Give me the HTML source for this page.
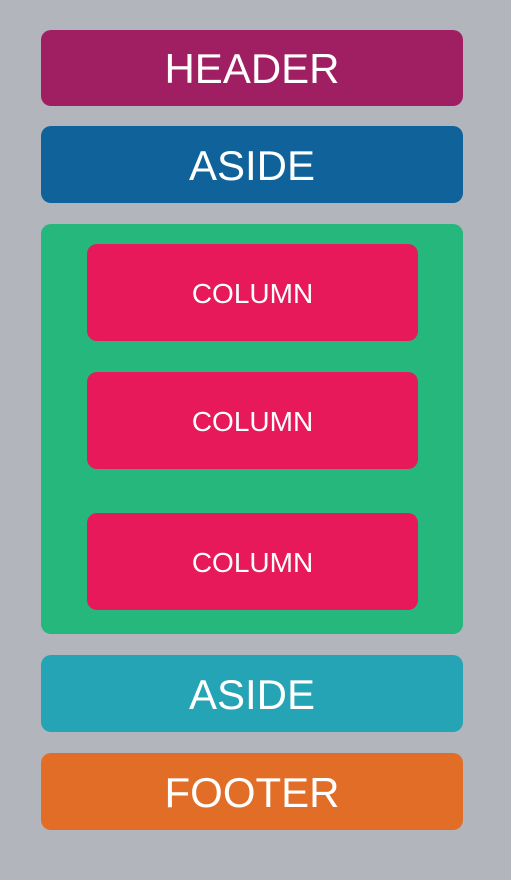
<!DOCTYPE html>
<html><head><style>
html,body{margin:0;padding:0;width:511px;height:880px;background:#b3b5bd;overflow:hidden;font-family:"Liberation Sans",sans-serif;}
.b{position:absolute;left:41px;width:422px;border-radius:10px;color:#fff;display:flex;align-items:center;justify-content:center;font-size:42px;padding-top:2px;box-sizing:border-box;}
.c{position:absolute;left:87px;width:331px;height:97px;border-radius:10px;background:#e7195a;color:#fff;display:flex;align-items:center;justify-content:center;font-size:28px;padding-top:2px;box-sizing:border-box;}
</style></head><body>
<div class="b" style="top:30px;height:76px;background:#a01e62">HEADER</div>
<div class="b" style="top:126px;height:77px;background:#0f639a">ASIDE</div>
<div class="b" style="top:224px;height:410px;background:#25b77c"></div>
<div class="c" style="top:244px">COLUMN</div>
<div class="c" style="top:372px">COLUMN</div>
<div class="c" style="top:513px">COLUMN</div>
<div class="b" style="top:655px;height:77px;background:#24a4b5">ASIDE</div>
<div class="b" style="top:753px;height:77px;background:#e16d27">FOOTER</div>
</body></html>
